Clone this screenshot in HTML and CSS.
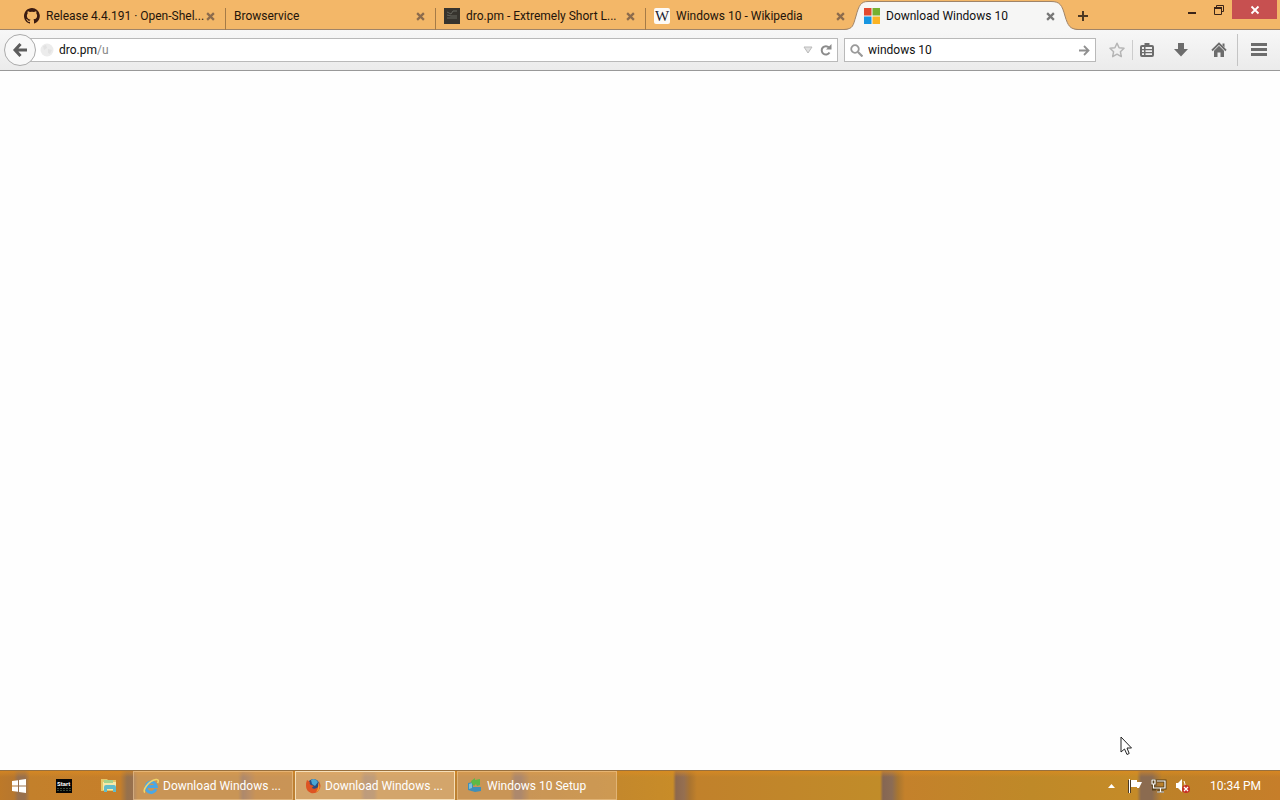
FILE: index.html
```html
<!DOCTYPE html>
<html lang="en">
<head>
    <meta charset="UTF-8">
    <meta name="viewport" content="width=device-width, initial-scale=1.0">
    <title>Download Windows 10</title>
    <link rel="stylesheet" href="styles.css">
</head>
<body>
    <header class="titlebar">
        <nav class="tabs">
            <div class="tab">
                <svg class="favicon" viewBox="0 0 16 16"><path fill="#3a1a10" d="M8 0C3.6 0 0 3.6 0 8c0 3.500 2.300 6.500 5.500 7.600.4.1.5-.2.500-.4v-1.400c-2.200.5-2.700-1-2.700-1-.4-.9-.9-1.200-.9-1.200-.7-.5.1-.5.1-.5.8.1 1.200.8 1.200.8.7 1.200 1.900.9 2.300.7.1-.5.3-.9.500-1.100-1.800-.2-3.600-.9-3.600-4 0-.9.3-1.600.8-2.100-.1-.2-.4-1 .1-2.100 0 0 .7-.2 2.200.8a7.500 7.500 0 0 1 4 0c1.500-1 2.200-.8 2.200-.8.4 1.100.2 1.900.1 2.100.5.6.8 1.300.8 2.100 0 3.100-1.900 3.700-3.700 3.900.3.300.6.8.6 1.500v2.200c0 .2.1.5.6.4A8 8 0 0 0 8 0z"/></svg>
                <a class="tab-title" href="#">Release 4.4.191 · Open-Shel...</a>
                <button class="tab-close" aria-label="Close tab"><svg viewBox="0 0 8 8"><path d="M1 1l6 6M7 1L1 7"/></svg></button>
            </div>
            <div class="tab">
                <a class="tab-title" href="#">Browservice</a>
                <button class="tab-close" aria-label="Close tab"><svg viewBox="0 0 8 8"><path d="M1 1l6 6M7 1L1 7"/></svg></button>
            </div>
            <div class="tab">
                <svg class="favicon" viewBox="0 0 16 16"><path fill="#37342e" d="M0 0h16v16H0z"/><path fill="none" stroke="#66665e" d="M13 3H9L7 6 3 4M3 7l4 1h6M3 10h10"/></svg>
                <a class="tab-title" href="#">dro.pm - Extremely Short L...</a>
                <button class="tab-close" aria-label="Close tab"><svg viewBox="0 0 8 8"><path d="M1 1l6 6M7 1L1 7"/></svg></button>
            </div>
            <div class="tab">
                <svg class="favicon" viewBox="0 0 16 16"><rect width="16" height="16" rx="2" fill="#fdfaf6"/><text class="wiki-letter" x="8" y="13">W</text></svg>
                <a class="tab-title" href="#">Windows 10 - Wikipedia</a>
                <button class="tab-close" aria-label="Close tab"><svg viewBox="0 0 8 8"><path d="M1 1l6 6M7 1L1 7"/></svg></button>
            </div>
            <div class="tab tab-active">
                <svg class="tab-shape" viewBox="0 0 234 30" preserveAspectRatio="none"><path fill="#f6f6f5" d="M0 30C9 29 9 26 12 16 15 5 17 1.500 24 1.500H207C216 1.500 218 5 221 16 224 26 226 29 234 30z"/><path fill="none" stroke="#a08468" d="M0 29.500C9 29 9 26 12 16 15 5 17 1.500 24 1.500H207C216 1.500 218 5 221 16 224 26 226 29 234 29.500"/></svg>
                <svg class="favicon" viewBox="0 0 16 16"><path fill="#e2492f" d="M0 0h7.500v7.500H0z"/><path fill="#76b030" d="M8.500 0H16v7.500H8.500z"/><path fill="#1695e0" d="M0 8.500h7.500V16H0z"/><path fill="#fbb322" d="M8.500 8.500H16V16H8.500z"/></svg>
                <a class="tab-title" href="#">Download Windows 10</a>
                <button class="tab-close" aria-label="Close tab"><svg viewBox="0 0 8 8"><path d="M1 1l6 6M7 1L1 7"/></svg></button>
            </div>
            <button class="new-tab" aria-label="New tab"><svg viewBox="0 0 10 10"><path d="M5 0v10M0 5h10"/></svg></button>
        </nav>
        <div class="window-buttons">
            <button class="win-btn" aria-label="Minimize"><svg viewBox="0 0 10 10"><path fill="#3b2418" d="M1 7h8v2H1z"/></svg></button>
            <button class="win-btn" aria-label="Restore"><svg viewBox="0 0 10 10"><path fill="none" stroke="#3b2418" d="M2.500 2V.5h7v6H8M.5 3h7v6.500h-7z"/><path fill="#3b2418" d="M0 2h8v2H0z"/></svg></button>
            <button class="win-btn win-close" aria-label="Close"><svg viewBox="0 0 10 10"><path fill="none" stroke="#fff" stroke-width="1.800" d="M1.500 1.500l7 7M8.500 1.500l-7 7"/></svg></button>
        </div>
    </header>

    <div class="toolbar">
        <button class="back" aria-label="Back"><svg viewBox="0 0 16 16"><path fill="none" stroke="#5c5c5c" stroke-width="3" d="M8.500 2L3 8l5.500 6M3 8h12"/></svg></button>
        <div class="urlbar">
            <svg class="globe" viewBox="0 0 14 14"><circle cx="7" cy="7" r="6.500" fill="#ececec"/><path fill="#e2e2e2" d="M3 3l3-1 1 3-3 2zM8 6l4 1-2 4-2-1z"/></svg>
            <span class="url"><b>dro.pm</b>/u</span>
            <input class="url-input" type="text" aria-label="Address">
            <button class="icon-btn" aria-label="History"><svg width="10" height="8" viewBox="0 0 10 8"><path fill="#e0e0e0" stroke="#bbb" d="M1 1h8L5 7z"/></svg></button>
            <button class="icon-btn reload" aria-label="Reload"><svg width="12" height="12" viewBox="0 0 12 12"><path fill="none" stroke="#8b8b8b" stroke-width="2" d="M9 3.500A4.200 4.200 0 1 0 9.500 8.500"/><path fill="#8b8b8b" d="M11.500 0v5.500H6z"/></svg></button>
        </div>
        <div class="searchbar">
            <svg width="13" height="13" viewBox="0 0 13 13"><circle cx="5" cy="5" r="3.800" fill="none" stroke="#999" stroke-width="1.800"/><path stroke="#999" stroke-width="2.200" d="M8 8l4.500 4.500"/></svg>
            <input class="search-input" type="text" value="windows 10" aria-label="Search">
            <button class="icon-btn" aria-label="Go"><svg width="11" height="11" viewBox="0 0 11 11"><path fill="none" stroke="#909090" stroke-width="1.800" d="M0 5.500h9.500M5 1l4.500 4.500L5 10"/></svg></button>
        </div>
        <div class="tools">
            <button class="tool tool-star" aria-label="Bookmark"><svg viewBox="0 0 16 16"><path fill="none" stroke="#b5b5b5" stroke-width="1.500" stroke-linejoin="round" d="M8 1.200l2.100 4.500 4.900.6-3.600 3.400.9 4.900L8 12.200l-4.300 2.400.9-4.900L1 6.300l4.900-.6z"/></svg></button>
            <button class="tool tool-list" aria-label="Bookmarks menu"><svg viewBox="0 0 16 16"><path fill="#6c6c6c" d="M5.500 1h5v2H13q2 0 2 2v8q0 2-2 2H3q-2 0-2-2V5q0-2 2-2h2.500z"/><path fill="#f0f0f0" d="M3 5h2v2H3zM6.500 5H13v2H6.500zM3 8.300h2v1.700H3zM6.500 8.300H13v1.700H6.500zM3 11.300h2V13H3zM6.500 11.300H13V13H6.500z"/></svg></button>
            <button class="tool tool-download" aria-label="Downloads"><svg viewBox="0 0 16 16"><path fill="#6c6c6c" d="M5 1h6v6h4l-7 7.500L1 7h4z"/></svg></button>
            <button class="tool" aria-label="Home"><svg viewBox="0 0 16 16"><path fill="none" stroke="#6c6c6c" stroke-width="1.800" d="M1 8.500l7-7 7 7"/><path fill="#6c6c6c" d="M11.500 1.500h2v4l-2-2zM3 8.800l5-5 5 5V15H9.500v-4.500h-3V15H3z"/></svg></button>
            <button class="tool tool-menu" aria-label="Menu"><svg viewBox="0 0 16 16"><path fill="#6c6c6c" d="M0 1h16v3H0zM0 6h16v3H0zM0 11h16v3H0z"/></svg></button>
        </div>
    </div>

    <main class="page"></main>

    <footer class="taskbar">
        <div class="launchers">
            <button class="launcher" aria-label="Start"><svg width="14" height="14" viewBox="0 0 14 14"><path fill="#fff" d="M0 2l6-.8v5.300H0zM7 1l7-1v6.500H7zM0 7.500h6v5.300L0 12zM7 7.500h7V14l-7-1z"/></svg></button>
            <button class="launcher" aria-label="Start shortcut"><svg width="16" height="14" viewBox="0 0 16 14"><path fill="#050505" d="M0 0h16v14H0z"/><text class="start-label" x="1" y="7">Start</text><path stroke="#3b4a38" stroke-dasharray="2 1" d="M1 9.500h14M1 11.500h14"/></svg></button>
            <button class="launcher" aria-label="File Explorer"><svg width="16" height="15" viewBox="0 0 16 15"><path fill="#e3c768" d="M0 1h6l1 1h8v11H0z"/><path fill="#f7e9a8" d="M2 4h13v8H2z"/><path fill="#a6d48c" d="M3 2h9v3H3z"/><path fill="#62bcc9" d="M3 14V9q0-2 2-2h8q2 0 2 2v5h-3v-3H6v3z"/></svg></button>
        </div>
        <div class="tasks">
            <button class="task">
                <svg class="task-icon" viewBox="0 0 16 16"><path fill="none" stroke="#4aa7e4" stroke-width="3" d="M13 11A5.200 5.200 0 1 1 13.300 8.500H4"/><path fill="none" stroke="#f1d468" stroke-width="1.600" d="M2 14.500C-1 13 5 3 13 1.500c3-.4 2.500 2 1.500 3.500"/></svg>
                <span>Download Windows ...</span>
            </button>
            <button class="task task-active">
                <svg class="task-icon" viewBox="0 0 16 16"><circle cx="8.500" cy="7" r="6" fill="#284d83"/><path fill="#4ba7d4" d="M6 2q4-3 7 2l-3 4-3-2z"/><path fill="#de5423" d="M2 2l3 2q-1 2 1 3l3 1q-2 1-2 2 3 2 6-1 2-3 1-6 3 5 0 9-3 4-8 3-5-2-5-7 0-4 1-6z"/><path fill="#f0a12f" d="M13 4q3 5 0 9l-2 1q3-4 2-10z"/></svg>
                <span>Download Windows ...</span>
            </button>
            <button class="task">
                <svg class="task-icon" viewBox="0 0 16 16"><path fill="#3f8fb8" d="M1 5l5-1v5h8v4l-6 1-7-2z"/><path fill="#7cc0d8" d="M2 6l3-1v5l-3 1z"/><path fill="#5cb947" d="M4 3l4-3v2l5-1v6l-3 1-1-2-2 2-2-2z"/></svg>
                <span>Windows 10 Setup</span>
            </button>
        </div>
        <div class="tray">
            <button class="tray-btn" aria-label="Show hidden icons"><svg width="7" height="4" viewBox="0 0 7 4"><path fill="#fff" d="M3.500 0L7 4H0z"/></svg></button>
            <button class="tray-btn" aria-label="Action Center"><svg width="16" height="14" viewBox="0 0 16 14"><path stroke="#4d3c25" stroke-width="3" d="M2.500 1v13"/><path fill="#fff" d="M2 0h1v14H2zM4 1h6v7H4zM10 3h5l-3 6h-2z"/></svg></button>
            <button class="tray-btn" aria-label="Network"><svg width="16" height="14" viewBox="0 0 16 14"><path fill="none" stroke="#584018" stroke-width="3" d="M6 2h8v7H4M9 9v4M6 13h7M1 1h3v4H1zM2.500 5v5H5"/><path fill="none" stroke="#fff" stroke-width="1.200" d="M6 2h8v7H4M9.500 9v4M6 13h7M1 1h3v4H1zM2.500 5v4H5"/></svg></button>
            <button class="tray-btn" aria-label="Volume"><svg width="16" height="15" viewBox="0 0 16 15"><path fill="#fff" d="M1 5h2l4-4v13l-4-4H1z"/><path fill="none" stroke="#fff" d="M9 3q2 3 0 7"/><circle cx="11" cy="11" r="4" fill="#c83127"/><path stroke="#fff" stroke-width="1.300" d="M9 9l4 4M13 9l-4 4"/></svg></button>
            <time class="clock">10:34 PM</time>
        </div>
    </footer>

    <svg class="cursor" viewBox="0 0 13 20"><path fill="#fff" stroke="#222" d="M1 1v15l3.500-3 2.500 5.500 2.200-1L7 12h4.500z"/></svg>
</body>
</html>
```

FILE: styles.css
```css
* {
    box-sizing: border-box;
}
body {
    margin: 0;
    height: 100vh;
    display: flex;
    flex-direction: column;
    overflow: hidden;
    background: #fefefe;
    font-family: Roboto, "Open Sans", sans-serif;
    font-size: 12px;
    line-height: 16px;
    color: #111;
}
button {
    display: flex;
    align-items: center;
    justify-content: center;
    padding: 0;
    border: none;
    background: none;
    font: inherit;
    color: inherit;
}
input {
    min-width: 0;
    padding: 0;
    border: none;
    outline: none;
    background: transparent;
    font: inherit;
    color: #111;
}
svg {
    flex: none;
}

/* Tab strip */
.titlebar {
    display: flex;
    justify-content: space-between;
    height: 30px;
    padding: 0 3px 0 16px;
    background: #f3b768;
    border-bottom: 1px solid #a08468;
}
.tabs {
    display: flex;
    height: 30px;
}
.tab {
    position: relative;
    display: flex;
    align-items: center;
    gap: 6px;
    width: 210px;
    padding: 2px 11px 0 8px;
    background: linear-gradient(#a57b47, #a57b47) right bottom / 1px 22px no-repeat;
}
.tab:nth-child(4) {
    background: none;
}
.tab-active {
    z-index: 1;
    background: none;
}
/* curved outline reaches over the neighbouring tab */
.tab-shape {
    position: absolute;
    top: 0;
    left: -12px;
    width: 234px;
    height: 30px;
    z-index: -1;
}
.favicon {
    width: 16px;
    height: 16px;
}
.wiki-letter {
    fill: #1c2230;
    font-family: "Liberation Serif", serif;
    font-size: 15px;
    text-anchor: middle;
}
.tab-title {
    flex: 1;
    min-width: 0;
    white-space: nowrap;
    color: #24140a;
    text-decoration: none;
}
.tab-active .tab-title {
    color: #111;
}
.tab-close svg {
    width: 9px;
    height: 9px;
    fill: none;
    stroke: #8c6b4c;
    stroke-width: 2;
}
.tab-active .tab-close svg {
    stroke: #777;
}
.new-tab {
    width: 34px;
    padding-top: 2px;
}
.new-tab svg {
    width: 10px;
    height: 10px;
    fill: none;
    stroke: #4d3923;
    stroke-width: 2;
}
.window-buttons {
    display: flex;
    height: 19px;
}
.win-btn {
    width: 27px;
    height: 19px;
}
.win-btn svg {
    width: 10px;
    height: 10px;
}
.win-close {
    width: 45px;
    background: #c75050;
}

/* Navigation toolbar */
.toolbar {
    display: flex;
    align-items: center;
    height: 41px;
    padding-left: 4px;
    background: linear-gradient(#f7f7f7, #ebebeb);
    border-bottom: 1px solid #999;
}
.back {
    z-index: 1;
    width: 32px;
    height: 32px;
    border: 1px solid #aaa;
    border-radius: 50%;
    background: #f8f8f8;
}
.back svg {
    width: 16px;
    height: 16px;
}
.urlbar {
    flex: 1;
    display: flex;
    align-items: center;
    height: 24px;
    margin-left: -8px;
    padding: 0 5px 0 11px;
    background: #fff;
    border: 1px solid #b9b9b9;
}
.globe {
    width: 14px;
    height: 14px;
}
.url {
    margin-left: 5px;
    color: #888;
}
.url b {
    font-weight: normal;
    color: #111;
}
.url-input {
    flex: 1;
}
.reload {
    margin-left: 7px;
}
.searchbar {
    display: flex;
    align-items: center;
    width: 252px;
    height: 24px;
    margin-left: 6px;
    padding: 0 5px;
    background: #fff;
    border: 1px solid #b9b9b9;
}
.search-input {
    flex: 1;
    margin-left: 5px;
}
.tools {
    display: flex;
    align-items: center;
    margin-left: 5px;
}
.tool {
    width: 35px;
    height: 28px;
}
.tool svg {
    width: 16px;
    height: 16px;
}
.tool-star {
    width: 31px;
}
.tool-list {
    width: 29px;
    height: 20px;
    border-left: 1px solid #ccc;
}
.tool-download {
    width: 40px;
}
.tool-menu {
    width: 43px;
    height: 32px;
    margin-left: 1px;
    border-left: 1px solid #c4c4c4;
}

.page {
    flex: 1;
}

.taskbar {
    display: flex;
    height: 30px;
    border-top: 1px solid #98703e;
    color: #fff;
    background:
        linear-gradient(rgba(225, 140, 30, 0.6), rgba(225, 140, 30, 0) 6px),
        linear-gradient(90deg,
            #bd7929 0, #b7772e 14px, #98704d 18px, #98704d 25px, #c3802b 30px,
            #c67f2a 120px, #96714c 127px, #98704d 133px, #bd8132 138px,
            #bd8132 238px, #8e6c58 243px, #a6764a 250px, #bd7e32 256px,
            #bd8132 360px, #8e6c58 365px, #94704f 374px, #bd8132 378px,
            #bd8132 510px, #8e6c58 515px, #8e6c58 521px, #bd8132 530px,
            #c88c28 673px, #8d684d 676px, #956f51 684px, #aa7430 690px, #c1812b 697px,
            #c18c29 880px, #856653 883px, #8b6c55 892px, #a97630 898px, #c4812b 905px,
            #bf8928 1030px, #c58b28 1137px, #8b6b50 1141px, #8b6b50 1152px,
            #bd8128 1162px, #c67e2a 1280px);
}
.launchers {
    display: flex;
    gap: 8px;
}
.launcher {
    width: 37px;
}
.start-label {
    fill: #fff;
    font-size: 6px;
    font-weight: bold;
}
.tasks {
    display: flex;
    gap: 2px;
    margin-left: 6px;
}
.task {
    justify-content: flex-start;
    gap: 4px;
    width: 160px;
    padding: 0 9px;
    white-space: nowrap;
    border: 1px solid rgba(255, 220, 170, 0.4);
    background: rgba(220, 180, 140, 0.4);
}
.task-active {
    border-color: #f6dfb8;
    background: rgba(230, 195, 155, 0.55);
}
.task-icon {
    width: 16px;
    height: 16px;
}
.tray {
    display: flex;
    align-items: center;
    margin-left: auto;
    padding-right: 19px;
}
.tray-btn {
    width: 24px;
    height: 28px;
}
.clock {
    margin-left: 15px;
}

.cursor {
    position: absolute;
    right: 147px;
    bottom: 44px;
    width: 13px;
    height: 20px;
}
```
